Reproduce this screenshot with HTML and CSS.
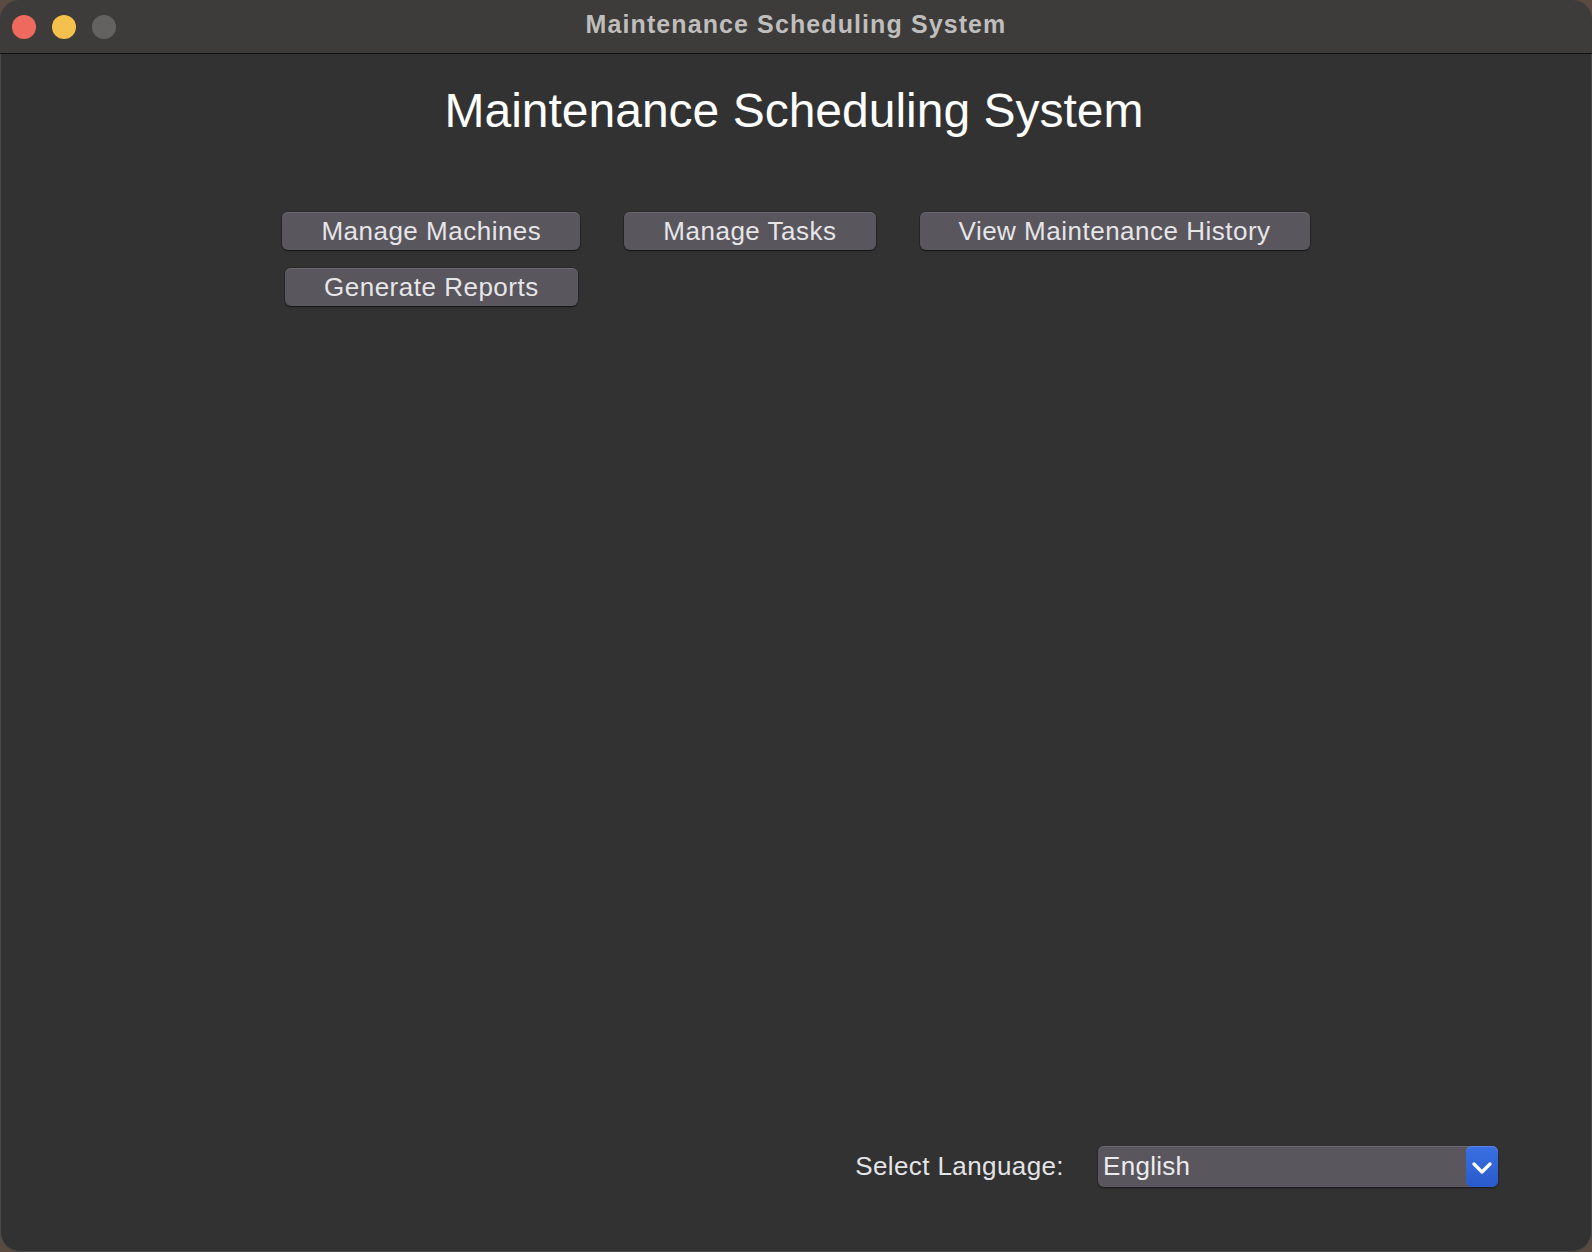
FILE: index.html
```html
<!DOCTYPE html>
<html lang="en">
<head>
<meta charset="utf-8">
<title>Maintenance Scheduling System</title>
<link rel="stylesheet" href="styles.css">
</head>
<body>
<div class="window">
  <header class="titlebar">
    <div class="lights">
      <span class="light red"></span>
      <span class="light yellow"></span>
      <span class="light gray"></span>
    </div>
    <div class="window-title">Maintenance Scheduling System</div>
    <div class="spacer"></div>
  </header>
  <main class="content">
    <h1 class="heading">Maintenance Scheduling System</h1>
    <div class="button-grid">
      <button class="btn">Manage Machines</button>
      <button class="btn">Manage Tasks</button>
      <button class="btn">View Maintenance History</button>
      <button class="btn">Generate Reports</button>
    </div>
    <div class="fill"></div>
    <div class="language-row">
      <span class="lang-label">Select Language:</span>
      <div class="select">
        <span class="select-value">English</span>
        <span class="select-arrow">
          <svg width="20" height="12" viewBox="0 0 20 12"><path d="M2 2 L10 10 L18 2" fill="none" stroke="#ffffff" stroke-width="3.2" stroke-linecap="round" stroke-linejoin="round"/></svg>
        </span>
      </div>
    </div>
  </main>
</div>
</body>
</html>
```

FILE: styles.css
```css
html, body {
  margin: 0;
  padding: 0;
  background: #5b4a3f;
}

body {
  width: 1592px;
  height: 1252px;
  overflow: hidden;
  font-family: "Liberation Sans", Arial, sans-serif;
}

.window {
  width: 1592px;
  height: 1252px;
  box-sizing: border-box;
  border-radius: 20px;
  overflow: hidden;
  background: #323232;
  display: flex;
  flex-direction: column;
  box-shadow: inset 0 0 0 1px rgba(255, 255, 255, 0.12);
}

.titlebar {
  height: 53px;
  flex: 0 0 53px;
  background: #3d3c3a;
  border-bottom: 1px solid #121212;
  display: grid;
  grid-template-columns: 1fr auto 1fr;
  align-items: center;
}

.lights {
  display: flex;
  gap: 16px;
  padding-left: 12px;
}

.light {
  width: 24px;
  height: 24px;
  border-radius: 50%;
  display: block;
}

.red { background: #ee6a5f; }
.yellow { background: #f5c14e; }
.gray { background: #636261; }

.window-title {
  font-family: "Liberation Sans", Arial, sans-serif;
  font-weight: bold;
  font-size: 25px;
  color: #bfbebd;
  letter-spacing: 1.1px;
  padding-bottom: 4px;
}

.content {
  flex: 1;
  display: flex;
  flex-direction: column;
}

.heading {
  margin: 33px 0 0 0;
  text-align: center;
  font-family: "Liberation Sans", Arial, sans-serif;
  font-weight: normal;
  font-size: 48px;
  line-height: 48px;
  color: #ffffff;
  padding-right: 4px;
}

.button-grid {
  margin-top: 77px;
  display: grid;
  grid-template-columns: auto auto auto;
  column-gap: 44px;
  row-gap: 18px;
  justify-content: center;
  justify-items: center;
}

.btn {
  height: 38px;
  padding: 0 39px;
  box-sizing: border-box;
  background: #59565d;
  color: #e6e5e8;
  font-family: "Liberation Sans", Arial, sans-serif;
  font-size: 26px;
  letter-spacing: 0.5px;
  border: none;
  border-radius: 6px;
  box-shadow: inset 0 1px 0 #6c6970, 0 1px 1.5px rgba(0, 0, 0, 0.55), 0 0 0 0.5px rgba(0, 0, 0, 0.35);
  line-height: 38px;
  cursor: default;
}

.fill {
  flex: 1;
}

.language-row {
  display: flex;
  justify-content: flex-end;
  align-items: center;
  gap: 34px;
  padding: 0 94px 65px 0;
}

.lang-label {
  font-size: 26px;
  color: #e4e3e6;
  letter-spacing: 0.4px;
}

.select {
  width: 400px;
  height: 41px;
  background: #59565d;
  border-radius: 6px;
  display: flex;
  align-items: center;
  justify-content: space-between;
  box-shadow: inset 0 1px 0 #6c6970, 0 1px 2px rgba(0, 0, 0, 0.5);
}

.select-value {
  padding-left: 5px;
  font-size: 26px;
  color: #ecebee;
  letter-spacing: 0.3px;
}

.select-arrow {
  width: 32px;
  height: 41px;
  border-radius: 6px;
  background: linear-gradient(#3a70e2, #2a5acc);
  display: flex;
  align-items: center;
  justify-content: center;
  box-shadow: inset 0 1px 0 #5686ea;
}

.select-arrow svg {
  display: block;
  margin-top: 2px;
}
```
